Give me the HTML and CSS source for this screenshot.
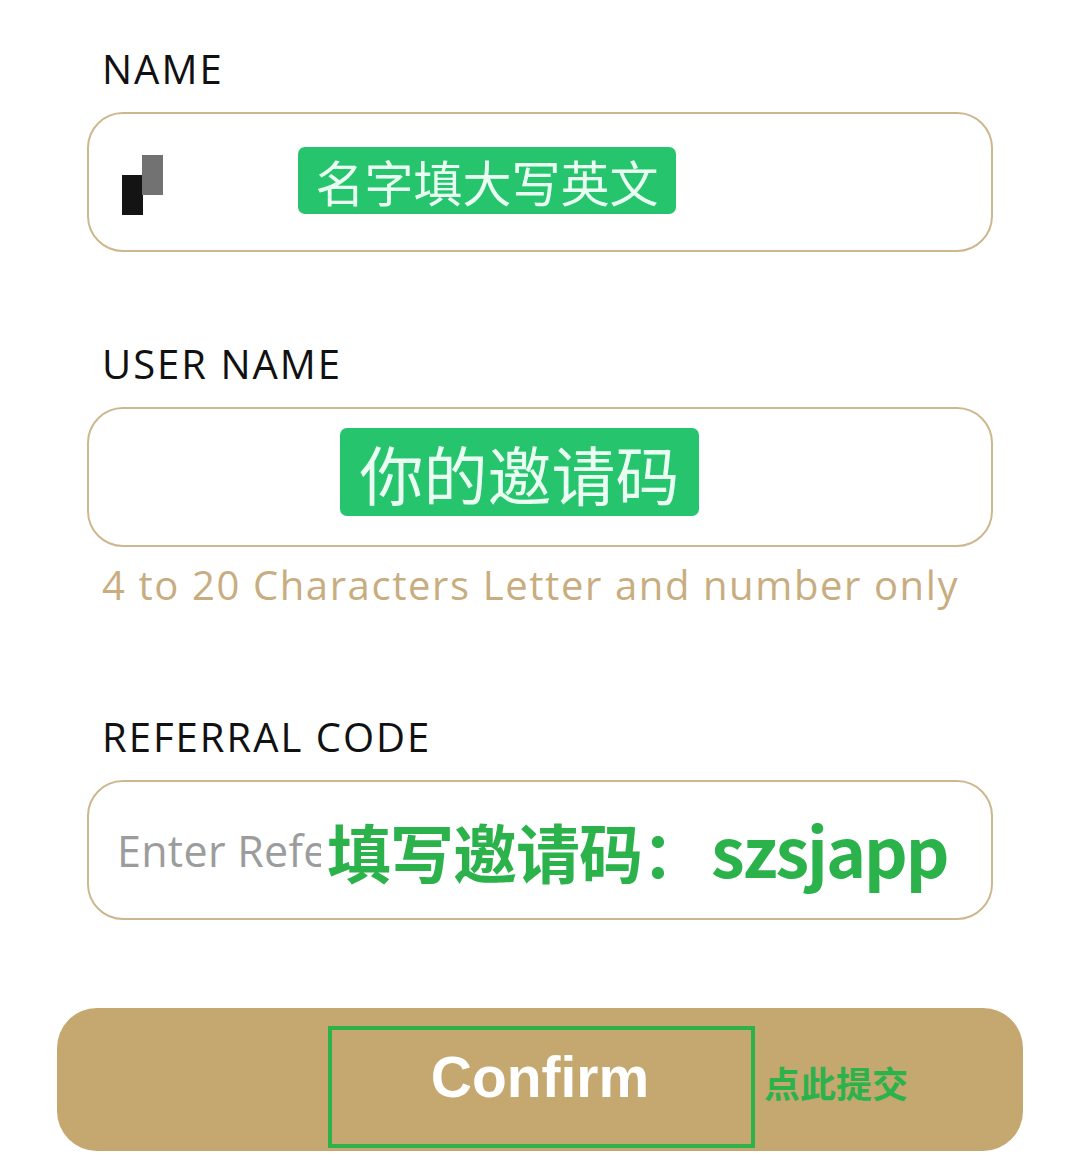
FILE: index.html
```html
<!DOCTYPE html>
<html lang="zh-CN">
<head>
    <meta charset="UTF-8">
    <title>Register</title>
    <link rel="stylesheet" href="styles.css">
</head>
<body>
    <div class="page">
        <form class="signup">
            <label class="field-label" for="name">NAME</label>
            <div class="field">
                <input class="field-input" type="text" id="name" name="name">
                <span class="mosaic"><i class="m-dark"></i><i class="m-grey"></i></span>
                <span class="tag tag-name">名字填大写英文</span>
            </div>

            <label class="field-label label-user" for="username">USER NAME</label>
            <div class="field">
                <input class="field-input" type="text" id="username" name="username">
                <span class="tag tag-user">你的邀请码</span>
            </div>
            <p class="hint">4 to 20 Characters Letter and number only</p>

            <label class="field-label label-ref" for="referral">REFERRAL CODE</label>
            <div class="field">
                <input class="field-input referral-input" type="text" id="referral" name="referral" placeholder="Enter Referral Code">
                <span class="note-code">填写邀请码：<span class="note-latin">szsjapp</span></span>
            </div>

            <div class="confirm">
                <span class="confirm-text">Confirm</span>
                <span class="confirm-frame"></span>
                <span class="confirm-note">点此提交</span>
            </div>
        </form>
    </div>
</body>
</html>
```

FILE: styles.css
```css
body {
    margin: 0;
    background-color: #fff;
    font-family: "Open Sans", "Noto Sans CJK SC", sans-serif;
}

.page {
    width: 1080px;
    height: 1169px;
    overflow: hidden;
}

.signup {
    margin: 0 0 0 87px;
    padding-top: 43px;
    width: 906px;
}

.field-label {
    display: block;
    padding-left: 15px;
    font-size: 40px;
    letter-spacing: 2px;
    line-height: 52px;
    color: #111;
    margin-bottom: 17px;
}

.label-user {
    margin-top: 86px;
}

.label-ref {
    margin-top: 100px;
}

.field {
    position: relative;
    height: 136px;
    border: 2px solid #cdb78e;
    border-radius: 36px;
    display: flex;
    align-items: center;
    background-color: #fff;
}

.field-input {
    margin-left: 28px;
    width: 840px;
    padding: 0;
    border: none;
    outline: none;
    background: transparent;
    font-family: "Open Sans", sans-serif;
    font-size: 43px;
    letter-spacing: 0.3px;
    color: #111;
}

.referral-input {
    width: 204px;
}

.field-input::placeholder {
    color: #9c9c9c;
}

.hint {
    margin: 12px 0 0;
    padding-left: 15px;
    font-size: 40px;
    letter-spacing: 1.6px;
    line-height: 52px;
    color: #c8ad80;
}

/* pixelated leftover of the name */
.mosaic {
    position: absolute;
    left: 33px;
    top: 41px;
    width: 41px;
    height: 60px;
}

.mosaic i {
    position: absolute;
    width: 21px;
    height: 40px;
}

.m-dark {
    left: 0;
    top: 20px;
    background-color: #141414;
}

.m-grey {
    left: 20px;
    top: 0;
    background-color: #727272;
}

.tag {
    position: absolute;
    background-color: #25c46d;
    color: #e8fff1;
    border-radius: 7px;
    font-family: "Noto Sans CJK SC", sans-serif;
    text-align: center;
}

.tag-name {
    left: 209px;
    top: 33px;
    width: 378px;
    height: 67px;
    font-size: 49px;
    line-height: 67px;
}

.tag-user {
    left: 251px;
    top: 19px;
    width: 359px;
    height: 88px;
    font-size: 64px;
    line-height: 88px;
}

.note-code {
    position: absolute;
    left: 238px;
    top: 22px;
    font-family: "Noto Sans CJK SC", sans-serif;
    font-weight: 700;
    font-size: 64px;
    letter-spacing: -1px;
    line-height: 90px;
    color: #2bb24b;
    white-space: nowrap;
}

.note-latin {
    margin-left: 6px;
    font-size: 68px;
    letter-spacing: -2px;
}

.confirm {
    position: relative;
    margin: 88px 0 0 -30px;
    width: 966px;
    height: 143px;
    border-radius: 40px;
    background-color: #c5a770;
    display: flex;
    align-items: center;
    justify-content: center;
}

.confirm-text {
    color: #fff;
    font-family: "Liberation Sans", sans-serif;
    font-weight: 700;
    font-size: 57px;
    margin-top: -5px;
}

.confirm-frame {
    position: absolute;
    left: 271px;
    top: 18px;
    width: 419px;
    height: 114px;
    border: 4px solid #2db14b;
}

.confirm-note {
    position: absolute;
    left: 707px;
    top: 49px;
    font-family: "Noto Sans CJK SC", sans-serif;
    font-weight: 700;
    font-size: 36px;
    line-height: 50px;
    color: #2bb24b;
}
```
